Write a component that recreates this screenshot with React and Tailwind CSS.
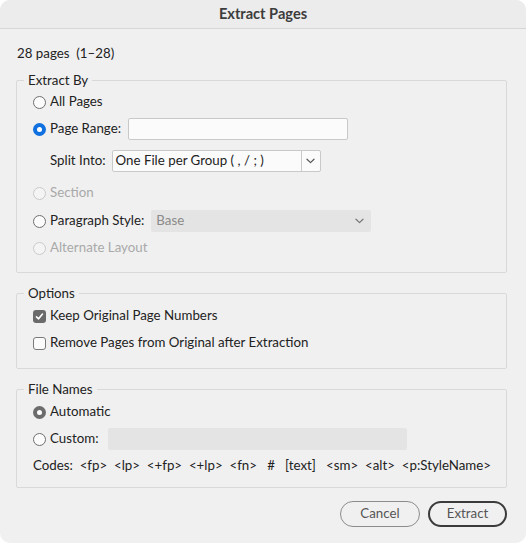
import React from "react";

const Radio = ({ state }) => {
  if (state === "blue")
    return (
      <span className="w-[13px] h-[13px] rounded-full bg-[#1070e0] flex items-center justify-center shrink-0">
        <span className="w-[5px] h-[5px] rounded-full bg-white" />
      </span>
    );
  if (state === "grey")
    return (
      <span className="w-[13px] h-[13px] rounded-full bg-[#6c6c6c] flex items-center justify-center shrink-0">
        <span className="w-[5px] h-[5px] rounded-full bg-white" />
      </span>
    );
  if (state === "disabled")
    return <span className="w-[13px] h-[13px] rounded-full border border-[#cacaca] bg-[#f4f4f4] shrink-0" />;
  return <span className="w-[13px] h-[13px] rounded-full border border-[#6f6f6f] bg-[#fbfbfb] shrink-0" />;
};

const Checkbox = ({ checked }) =>
  checked ? (
    <span className="w-[13px] h-[13px] rounded-[3px] bg-[#6a6a6a] flex items-center justify-center shrink-0">
      <svg width="9" height="9" viewBox="0 0 9 9" fill="none">
        <path d="M1.5 4.8 L3.6 6.8 L7.5 2" stroke="white" strokeWidth="1.6" strokeLinecap="round" strokeLinejoin="round" />
      </svg>
    </span>
  ) : (
    <span className="w-[13px] h-[13px] rounded-[3px] border border-[#7a7a7a] bg-[#fbfbfb] shrink-0" />
  );

const Chevron = ({ color = "#555" }) => (
  <svg width="9" height="6" viewBox="0 0 9 6" fill="none">
    <path d="M1 1.2 L4.5 4.6 L8 1.2" stroke={color} strokeWidth="1.2" strokeLinecap="round" strokeLinejoin="round" />
  </svg>
);

const Group = ({ title, className, children }) => (
  <fieldset className={`ml-[16px] w-[491px] border border-[#d9d9d9] rounded-[2px] ${className}`}>
    <legend className="ml-[7px] px-[4px] h-[18px] leading-[18px] text-[#222]">{title}</legend>
    {children}
  </fieldset>
);

const Row = ({ h, children, className = "" }) => (
  <div className={`flex items-center pl-[16px] ${h} ${className}`}>{children}</div>
);

export default function App() {
  return (
    <div className="w-[526px] h-[543px] bg-white" style={{ fontFamily: "Lato, 'Liberation Sans', sans-serif" }}>
      <div className="w-full h-full rounded-[10px] overflow-hidden bg-[#f0f0f0] text-[13.3px] text-[#222] flex flex-col">
        <div className="h-[29px] shrink-0 bg-[#ececec] border-b border-[#d6d6d6] flex items-center justify-center font-bold text-[14.6px] text-[#3d3d3d]">
          Extract Pages
        </div>

        <div className="mt-[14px] ml-[17px] h-[18px] leading-[18px] pt-[1px]">28 pages&nbsp; (1–28)</div>

        <Group title="Extract By" className="mt-[10px] pb-[11px]">
          <Row h="h-[26px]">
            <Radio />
            <span className="ml-[4px]">All Pages</span>
          </Row>
          <Row h="h-[28px]">
            <Radio state="blue" />
            <span className="ml-[4px]">Page Range:</span>
            <span className="ml-[7px] w-[220px] h-[22px] bg-[#fbfbfb] border border-[#c9c9c9] rounded-[2px]" />
          </Row>
          <Row h="h-[36px]" className="pl-[33px]">
            <span>Split Into:</span>
            <span className="ml-[6px] w-[209px] h-[22px] bg-[#fbfbfb] border border-[#c9c9c9] rounded-[2px] flex items-stretch">
              <span className="flex-1 flex items-center pl-[3px] text-[#222]">One File per Group ( , / ; )</span>
              <span className="w-[19px] border-l border-[#c9c9c9] flex items-center justify-center">
                <Chevron />
              </span>
            </span>
          </Row>
          <Row h="h-[28px]">
            <Radio state="disabled" />
            <span className="ml-[4px] text-[#a9a9a9]">Section</span>
          </Row>
          <Row h="h-[28px]">
            <Radio />
            <span className="ml-[4px]">Paragraph Style:</span>
            <span className="ml-[7px] w-[220px] h-[22px] bg-[#e4e4e4] rounded-[2px] flex items-center justify-between pl-[5px] pr-[7px]">
              <span className="text-[#8a8a8a]">Base</span>
              <Chevron color="#777" />
            </span>
          </Row>
          <Row h="h-[26px]">
            <Radio state="disabled" />
            <span className="ml-[4px] text-[#a9a9a9]">Alternate Layout</span>
          </Row>
        </Group>

        <Group title="Options" className="mt-[11px] pb-[12px]">
          <Row h="h-[28px]">
            <Checkbox checked />
            <span className="ml-[4px]">Keep Original Page Numbers</span>
          </Row>
          <Row h="h-[26px]">
            <Checkbox />
            <span className="ml-[4px]">Remove Pages from Original after Extraction</span>
          </Row>
        </Group>

        <Group title="File Names" className="mt-[11px] pb-[7px]">
          <Row h="h-[28px]">
            <Radio state="grey" />
            <span className="ml-[4px]">Automatic</span>
          </Row>
          <Row h="h-[26px]">
            <Radio />
            <span className="ml-[4px]">Custom:</span>
            <span className="ml-[10px] w-[299px] h-[22px] bg-[#e4e4e4] rounded-[2px]" />
          </Row>
          <Row h="h-[28px]" className="pl-[15px]">
            <span className="whitespace-pre">Codes:  {"<fp>  <lp>  <+fp>  <+lp>  <fn>   #   [text]   <sm>  <alt>  <p:StyleName>"}</span>
          </Row>
        </Group>

        <div className="mt-[13px] flex justify-end gap-[8px] pr-[19px]">
          <button className="w-[80px] h-[26px] rounded-full border border-[#8c8c8c] text-[#555]">Cancel</button>
          <button className="w-[79px] h-[26px] rounded-full border-2 border-[#3b3b3b] text-[#555]">Extract</button>
        </div>
      </div>
    </div>
  );
}
